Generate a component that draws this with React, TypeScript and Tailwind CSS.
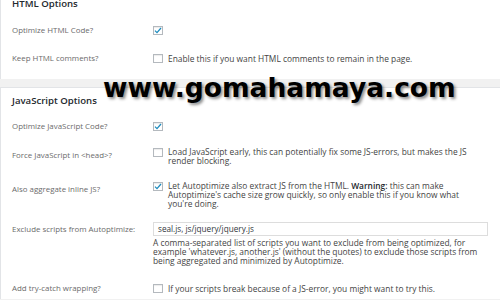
import { ReactNode } from "react";

const Check = ({ checked }: { checked?: boolean }) => (
    <span className="flex-none w-[10px] h-[9px] border border-[#b4b9be] bg-white flex items-center justify-center shadow-[inset_0_1px_1px_rgba(0,0,0,0.08)]">
        {checked && (
            <svg width="8" height="7" viewBox="0 0 8 7">
                <path d="M1 3.6 L3 5.6 L7 1" fill="none" stroke="#1e8cbe" strokeWidth="1.3" />
            </svg>
        )}
    </span>
);

const Label = ({ children, className = "" }: { children: ReactNode; className?: string }) => (
    <div className={`w-[141px] flex-none text-[#6b6b6b] text-[7.9px] leading-[9px] ${className}`}>{children}</div>
);

const Desc = ({ children }: { children: ReactNode }) => (
    <div className="text-[#444] text-[8.4px] leading-[9px]">{children}</div>
);

const App = () => {
    return (
        <div className="relative w-[500px] h-[300px] overflow-hidden bg-[#f1f1f1]" style={{ fontFamily: '"Open Sans", "Liberation Sans", sans-serif' }}>

            <div className="bg-white border-l border-[#e2e4e7] h-[80px] pl-[11px]">
                <div className="-mt-[1px] text-[9.6px] leading-[10px] font-semibold text-[#23282d]">HTML Options</div>
                <div className="flex items-center h-[10px] mt-[16px]">
                    <Label>Optimize HTML Code?</Label>
                    <Check checked />
                </div>
                <div className="flex items-center h-[10px] mt-[18px]">
                    <Label>Keep HTML comments?</Label>
                    <Check />
                    <span className="ml-[5px]"><Desc>Enable this if you want HTML comments to remain in the page.</Desc></span>
                </div>
            </div>

            <div className="mt-[8px] bg-white border-l border-t border-[#e2e4e7] h-[212px] pl-[11px]">
                <div className="mt-[8px] text-[9.6px] leading-[10px] font-semibold text-[#23282d]">JavaScript Options</div>

                <div className="flex items-center h-[10px] mt-[15px]">
                    <Label>Optimize JavaScript Code?</Label>
                    <Check checked />
                </div>

                <div className="flex items-start mt-[16px]">
                    <Label className="pt-[4px]">Force JavaScript in &lt;head&gt;?</Label>
                    <span className="mt-[1px]"><Check /></span>
                    <div className="ml-[5px] w-[300px]">
                        <Desc>Load JavaScript early, this can potentially fix some JS-errors, but makes the JS render blocking.</Desc>
                    </div>
                </div>

                <div className="flex items-start mt-[16px]">
                    <Label className="pt-[4px]">Also aggregate inline JS?</Label>
                    <span className="mt-[1px]"><Check checked /></span>
                    <div className="ml-[5px] w-[312px]">
                        <Desc>Let Autoptimize also extract JS from the HTML. <b className="font-semibold text-[#23282d]">Warning:</b> this can make Autoptimize's cache size grow quickly, so only enable this if you know what you're doing.</Desc>
                    </div>
                </div>

                <div className="flex items-start mt-[14px]">
                    <Label className="pt-[2.5px]">Exclude scripts from Autoptimize:</Label>
                    <div className="w-[335px]">
                        <div className="h-[14px] border border-[#dddddd] bg-white pl-[4px] text-[#32373c] text-[8.2px] leading-[12px]">seal.js, js/jquery/jquery.js</div>
                        <div className="mt-[1.5px]">
                            <Desc>A comma-separated list of scripts you want to exclude from being optimized, for example 'whatever.js, another.js' (without the quotes) to exclude those scripts from being aggregated and minimized by Autoptimize.</Desc>
                        </div>
                    </div>
                </div>

                <div className="flex items-center h-[10px] mt-[19px]">
                    <Label>Add try-catch wrapping?</Label>
                    <Check />
                    <span className="ml-[5px]"><Desc>If your scripts break because of a JS-error, you might want to try this.</Desc></span>
                </div>
            </div>

            <div className="absolute left-[103px] top-[73px] text-[26.5px] leading-[30px] font-bold text-black whitespace-nowrap [text-shadow:2px_2px_3px_rgba(0,0,0,0.45)]" style={{ fontFamily: '"DejaVu Sans", sans-serif' }}>
                www.gomahamaya.com
            </div>
        </div>
    );
};

export default App;
